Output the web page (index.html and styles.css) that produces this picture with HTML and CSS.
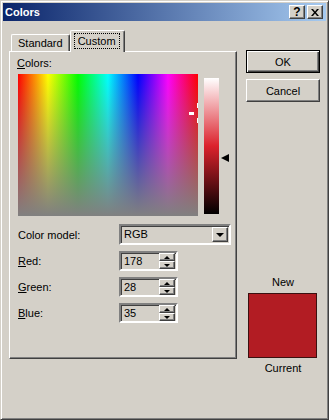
FILE: index.html
```html
<!doctype html>
<html lang="en">
  <head>
    <meta charset="utf-8" />
    <title>Colors</title>
    <link rel="stylesheet" href="styles.css">
  </head>
  <body>
    <div class="window">
      <!-- Title bar -->
      <div class="titlebar">
        <span class="title">Colors</span>
        <div class="titleButtons">
          <div class="tbtn help">?</div>
          <div class="tbtn">
            <svg width="8" height="7" viewBox="0 0 8 7">
              <path d="M0 0h2l2 2.5L6 0h2L5 3.5 8 7H6L4 4.5 2 7H0l3-3.5z" fill="#000"/>
            </svg>
          </div>
        </div>
      </div>

      <div class="client">
        <div class="tabArea">
          <div class="tabs">
            <div class="tab">Standard</div>
            <div class="tab active"><span class="focus">Custom</span></div>
          </div>
          <div class="panel">
            <div class="caption"><u>C</u>olors:</div>
            <div class="picker">
              <div class="spectrum">
                <span class="cross h"></span>
                <span class="cross v1"></span>
                <span class="cross v2"></span>
              </div>
              <div class="lum"></div>
              <div class="arrow"></div>
            </div>
            <div class="form">
              <label>Color model:</label>
              <div class="select">
                <span class="value">RGB</span>
                <div class="dropBtn"><span class="down"></span></div>
              </div>
              <label><u>R</u>ed:</label>
              <div class="spin">
                <span class="value">178</span>
                <div class="spinBtns">
                  <div class="spinBtn"><span class="up"></span></div>
                  <div class="spinBtn"><span class="down small"></span></div>
                </div>
              </div>
              <label><u>G</u>reen:</label>
              <div class="spin">
                <span class="value">28</span>
                <div class="spinBtns">
                  <div class="spinBtn"><span class="up"></span></div>
                  <div class="spinBtn"><span class="down small"></span></div>
                </div>
              </div>
              <label><u>B</u>lue:</label>
              <div class="spin">
                <span class="value">35</span>
                <div class="spinBtns">
                  <div class="spinBtn"><span class="up"></span></div>
                  <div class="spinBtn"><span class="down small"></span></div>
                </div>
              </div>
            </div>
          </div>
        </div>

        <div class="side">
          <div class="btn default">OK</div>
          <div class="btn">Cancel</div>
          <div class="preview">
            <div class="previewLabel">New</div>
            <div class="swatch"></div>
            <div class="previewLabel">Current</div>
          </div>
        </div>
      </div>
    </div>
  </body>
</html>
```

FILE: styles.css
```css
* {
  box-sizing: border-box;
}
body {
  margin: 0;
  background: #d4d0c8;
  color: #000;
  font-family: "Liberation Sans", Arial, sans-serif;
  font-size: 11px;
}
u {
  text-decoration: underline;
  text-underline-offset: 1px;
}
.window {
  width: 329px;
  height: 420px;
  border: 1px solid;
  border-color: #d4d0c8 #404040 #404040 #d4d0c8;
  box-shadow: inset 1px 1px #fff, inset -1px -1px #808080;
  padding: 2px;
  display: flex;
  flex-direction: column;
}
/* Title bar */
.titlebar {
  height: 18px;
  background: linear-gradient(to right, #0a246a, #a6caf0);
  display: flex;
  align-items: center;
  justify-content: space-between;
  padding: 0 3px 0 2px;
}
.title {
  color: #fff;
  font-weight: bold;
}
.titleButtons {
  display: flex;
  gap: 2px;
}
.tbtn {
  width: 16px;
  height: 14px;
  background: #d4d0c8;
  border: 1px solid;
  border-color: #fff #404040 #404040 #fff;
  box-shadow: inset -1px -1px #808080;
  display: flex;
  align-items: center;
  justify-content: center;
}
.tbtn.help {
  font-weight: bold;
  font-size: 12px;
  line-height: 12px;
}
/* Client area */
.client {
  display: flex;
  padding: 10px 0 0 6px;
}
.tabArea {
  width: 228px;
}
.tabs {
  display: flex;
  align-items: flex-end;
  height: 20px;
  padding-left: 2px;
}
.tab {
  height: 17px;
  padding: 0 6px;
  border-top: 1px solid #fff;
  border-left: 1px solid #fff;
  border-right: 1px solid #404040;
  box-shadow: inset -1px 0 #808080;
  border-top-left-radius: 2px;
  border-top-right-radius: 2px;
  display: flex;
  align-items: center;
}
.tab.active {
  position: relative;
  z-index: 1;
  height: 22px;
  margin-bottom: -1px;
  padding: 0 4px 2px 3px;
  background: #d4d0c8;
}
.focus {
  border: 1px dotted #000;
  padding: 1px 3px;
  line-height: 12px;
}
.panel {
  width: 228px;
  height: 308px;
  border: 1px solid;
  border-color: #fff #404040 #404040 #fff;
  box-shadow: inset -1px -1px #808080;
  padding: 5px 0 0 7px;
}
.caption {
  line-height: 13px;
}
.picker {
  display: flex;
  align-items: flex-start;
  margin-top: 4px;
}
.spectrum {
  position: relative;
  margin-left: 1px;
  width: 180px;
  height: 142px;
  background:
    linear-gradient(to bottom, rgba(128, 128, 128, 0), #808080),
    linear-gradient(to right, #f00, #ff0, #0f0, #0ff, #00f, #f0f, #f00);
}
.cross {
  position: absolute;
  background: #fff;
}
.cross.h {
  left: 171px;
  top: 38px;
  width: 5px;
  height: 3px;
}
.cross.v1 {
  left: 179px;
  top: 29px;
  width: 1px;
  height: 5px;
}
.cross.v2 {
  left: 179px;
  top: 44px;
  width: 1px;
  height: 5px;
}
.lum {
  margin: 4px 0 0 6px;
  width: 15px;
  height: 136px;
  background: linear-gradient(#fff, #dc222c 50%, #000);
}
.arrow {
  margin: 80px 0 0 2px;
  width: 0;
  height: 0;
  border-right: 8px solid #000;
  border-top: 4.5px solid transparent;
  border-bottom: 4.5px solid transparent;
}
/* Form fields */
.form {
  display: grid;
  grid-template-columns: 101px auto;
  row-gap: 6px;
  align-items: center;
  margin-top: 8px;
  padding-left: 1px;
}
.select,
.spin {
  display: flex;
  align-items: stretch;
  border: 2px solid;
  border-color: #808080 #fff #fff #808080;
  box-shadow: inset 1px 1px #404040, inset -1px -1px #d4d0c8;
  padding: 1px;
}
.select {
  width: 112px;
  height: 21px;
}
.spin {
  width: 59px;
  height: 20px;
  padding: 0 1px 0 1px;
}
.value {
  flex: 1;
  padding-left: 2px;
  line-height: 15px;
}
.spin .value {
  line-height: 16px;
}
.dropBtn {
  width: 16px;
  border: 1px solid;
  border-color: #fff #404040 #404040 #fff;
  box-shadow: inset -1px -1px #808080;
  display: flex;
  align-items: center;
  justify-content: center;
}
.spinBtns {
  width: 16px;
  display: flex;
  flex-direction: column;
}
.spinBtn {
  height: 8px;
  border: 1px solid;
  border-color: #fff #404040 #404040 #fff;
  box-shadow: inset -1px -1px #808080;
  display: flex;
  align-items: center;
  justify-content: center;
}
.down {
  width: 0;
  height: 0;
  border-top: 4px solid #000;
  border-left: 4px solid transparent;
  border-right: 4px solid transparent;
}
.down.small,
.up {
  border-width: 3px;
}
.up {
  width: 0;
  height: 0;
  border-top: 0;
  border-bottom: 3px solid #000;
  border-left: 3px solid transparent;
  border-right: 3px solid transparent;
}
.down.small {
  border-bottom: 0;
}
/* Right column */
.side {
  width: 74px;
  margin: 19px 0 0 9px;
  display: flex;
  flex-direction: column;
  gap: 6px;
}
.btn {
  height: 23px;
  background: #d4d0c8;
  border: 1px solid;
  border-color: #fff #404040 #404040 #fff;
  box-shadow: inset -1px -1px #808080;
  display: flex;
  align-items: center;
  justify-content: center;
}
.btn.default {
  border: 1px solid #000;
  box-shadow: inset 1px 1px #fff, inset -1px -1px #404040, inset -2px -2px #808080;
}
.preview {
  margin-top: 168px;
  display: flex;
  flex-direction: column;
  align-items: center;
}
.previewLabel {
  line-height: 13px;
}
.swatch {
  align-self: flex-start;
  width: 69px;
  height: 65px;
  margin: 4px 0 4px 2px;
  background: #b21c23;
  border: 1px solid #3a1010;
}
```
